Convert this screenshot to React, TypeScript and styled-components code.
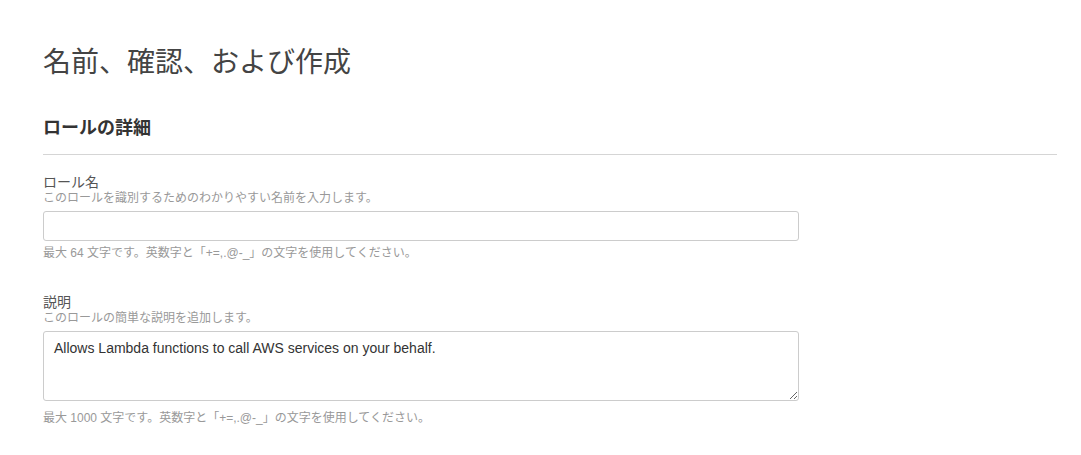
import React from "react";
import styled, { createGlobalStyle } from "styled-components";

const Global = createGlobalStyle`
  html, body { margin: 0; padding: 0; background: #fff; }
  body { font-family: "Liberation Sans", "Noto Sans CJK JP", sans-serif; }
`;

const Page = styled.main`
  padding: 44px 24px 0 43px;
`;

const Title = styled.h1`
  margin: 0;
  font-size: 28px;
  line-height: 32px;
  font-weight: 400;
  color: #444;
  font-family: "Noto Sans CJK JP", sans-serif;
`;

const SectionHeading = styled.h2`
  margin: 38px 0 0;
  font-size: 18px;
  line-height: 24px;
  font-weight: 700;
  color: #333;
  font-family: "Noto Sans CJK JP", sans-serif;
  padding-bottom: 16px;
  border-bottom: 1px solid #d5d5d5;
`;

const Field = styled.div<{ $gap: number }>`
  display: flex;
  flex-direction: column;
  margin-top: ${(p) => p.$gap}px;
`;

const Label = styled.label`
  font-size: 14px;
  line-height: 18px;
  color: #555;
  font-family: "Noto Sans CJK JP", sans-serif;
`;

const Hint = styled.div<{ $top?: number }>`
  font-size: 12px;
  line-height: 16px;
  color: #999;
  margin-top: ${(p) => p.$top ?? 0}px;
  font-family: "Liberation Sans", "Noto Sans CJK JP", sans-serif;
`;

const TextInput = styled.input`
  box-sizing: border-box;
  width: 756px;
  height: 30px;
  margin-top: 5px;
  border: 1px solid #ccc;
  border-radius: 3px;
  padding: 0 10px;
  font-size: 14px;
  font-family: "Liberation Sans", sans-serif;
  outline: none;
`;

const TextArea = styled.textarea`
  box-sizing: border-box;
  width: 756px;
  height: 70px;
  margin-top: 5px;
  border: 1px solid #ccc;
  border-radius: 3px;
  padding: 6px 10px;
  font-size: 14px;
  line-height: 20px;
  color: #333;
  font-family: "Liberation Sans", sans-serif;
  outline: none;
  display: block;
`;

export default function App() {
  return (
    <>
      <Global />
      <Page>
        <Title>名前、確認、および作成</Title>
        <SectionHeading>ロールの詳細</SectionHeading>
        <Field $gap={17}>
          <Label>ロール名</Label>
          <Hint>このロールを識別するためのわかりやすい名前を入力します。</Hint>
          <TextInput type="text" defaultValue="" />
          <Hint $top={4}>最大 64 文字です。英数字と「+=,.@-_」の文字を使用してください。</Hint>
        </Field>
        <Field $gap={31}>
          <Label>説明</Label>
          <Hint>このロールの簡単な説明を追加します。</Hint>
          <TextArea defaultValue="Allows Lambda functions to call AWS services on your behalf." />
          <Hint $top={9}>最大 1000 文字です。英数字と「+=,.@-_」の文字を使用してください。</Hint>
        </Field>
      </Page>
    </>
  );
}
